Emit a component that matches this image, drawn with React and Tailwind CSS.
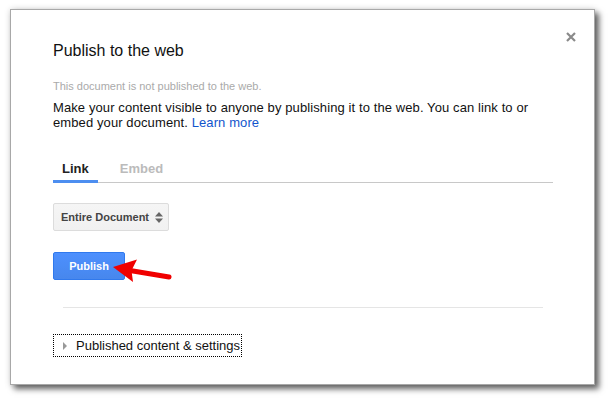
import React from "react";

function SortArrows() {
  return (
    <svg width="8" height="11" viewBox="0 0 8 11" className="ml-[6px]">
      <path d="M4 0 L8 4.5 L0 4.5 Z" fill="#666" />
      <path d="M0 6.5 L8 6.5 L4 11 Z" fill="#666" />
    </svg>
  );
}

function RedArrow() {
  return (
    <svg
      width="66"
      height="32"
      viewBox="0 0 66 32"
      className="absolute left-[57px] top-[3px]"
    >
      <line x1="20" y1="15.5" x2="59" y2="22" stroke="#f00000" strokeWidth="5" strokeLinecap="round" />
      <path d="M3 12 L27 4.5 L21.5 15.5 L23 27 Z" fill="#f00000" />
    </svg>
  );
}

export default function App() {
  return (
    <div className="w-[612px] h-[402px] bg-white overflow-hidden font-['Liberation_Sans',Arial,sans-serif]">
      <div className="relative ml-[10px] mt-[9px] w-[585px] h-[376px] bg-white border border-[#a8a8a8] shadow-[4px_4px_6px_rgba(0,0,0,0.6),0_0_6px_rgba(0,0,0,0.15)] pl-[42px] pr-[41px] pt-[32px]">
        <button className="absolute right-[16px] top-[20px] p-[2px]">
          <svg width="10" height="10" viewBox="0 0 10 10">
            <path d="M1 1 L9 9 M9 1 L1 9" stroke="#8a8a8a" strokeWidth="2.2" />
          </svg>
        </button>

        <h1 className="text-[16px] leading-[18px] text-[#111]">Publish to the web</h1>

        <p className="mt-[20px] text-[11px] leading-[13px] text-[#aaa]">
          This document is not published to the web.
        </p>
        <p className="mt-[7px] text-[13px] leading-[15px] tracking-[0.1px] text-[#111]">
          Make your content visible to anyone by publishing it to the web. You can link to or
          embed your document. <a className="text-[#15c]">Learn more</a>
        </p>

        <div className="mt-[31px] flex border-b border-[#c8c8c8]">
          <div className="px-[9px] pb-[4px] text-[13px] leading-[15px] font-bold text-[#222] border-b-[3px] border-[#4d8ef0] -mb-px">
            Link
          </div>
          <div className="ml-[13px] px-[9px] pb-[4px] text-[13px] leading-[15px] font-bold text-[#bbb]">
            Embed
          </div>
        </div>

        <div className="mt-[20px] flex">
          <div className="flex items-center h-[28px] pl-[7px] pr-[5px] rounded-[2px] border border-[#dcdcdc] bg-gradient-to-b from-[#f5f5f5] to-[#f1f1f1] text-[11px] font-bold text-[#444]">
            Entire Document
            <SortArrows />
          </div>
        </div>

        <div className="relative mt-[21px] h-[28px]">
          <button className="w-[72px] h-[28px] rounded-[2px] border border-[#3079ed] bg-gradient-to-b from-[#4d90fe] to-[#4787ed] text-[11px] font-bold text-white">
            Publish
          </button>
          <RedArrow />
        </div>

        <div className="mt-[27px] mx-[10px] h-px bg-[#e5e5e5]" />

        <div className="mt-[26px] flex">
          <div className="flex items-center h-[23px] pl-[9px] pr-px border border-dotted border-black text-[13px] text-[#111]">
            <svg width="4" height="8" viewBox="0 0 4 8" className="mr-[9px]">
              <path d="M0 0 L4 4 L0 8 Z" fill="#999" />
            </svg>
            Published content &amp; settings
          </div>
        </div>
      </div>
    </div>
  );
}
